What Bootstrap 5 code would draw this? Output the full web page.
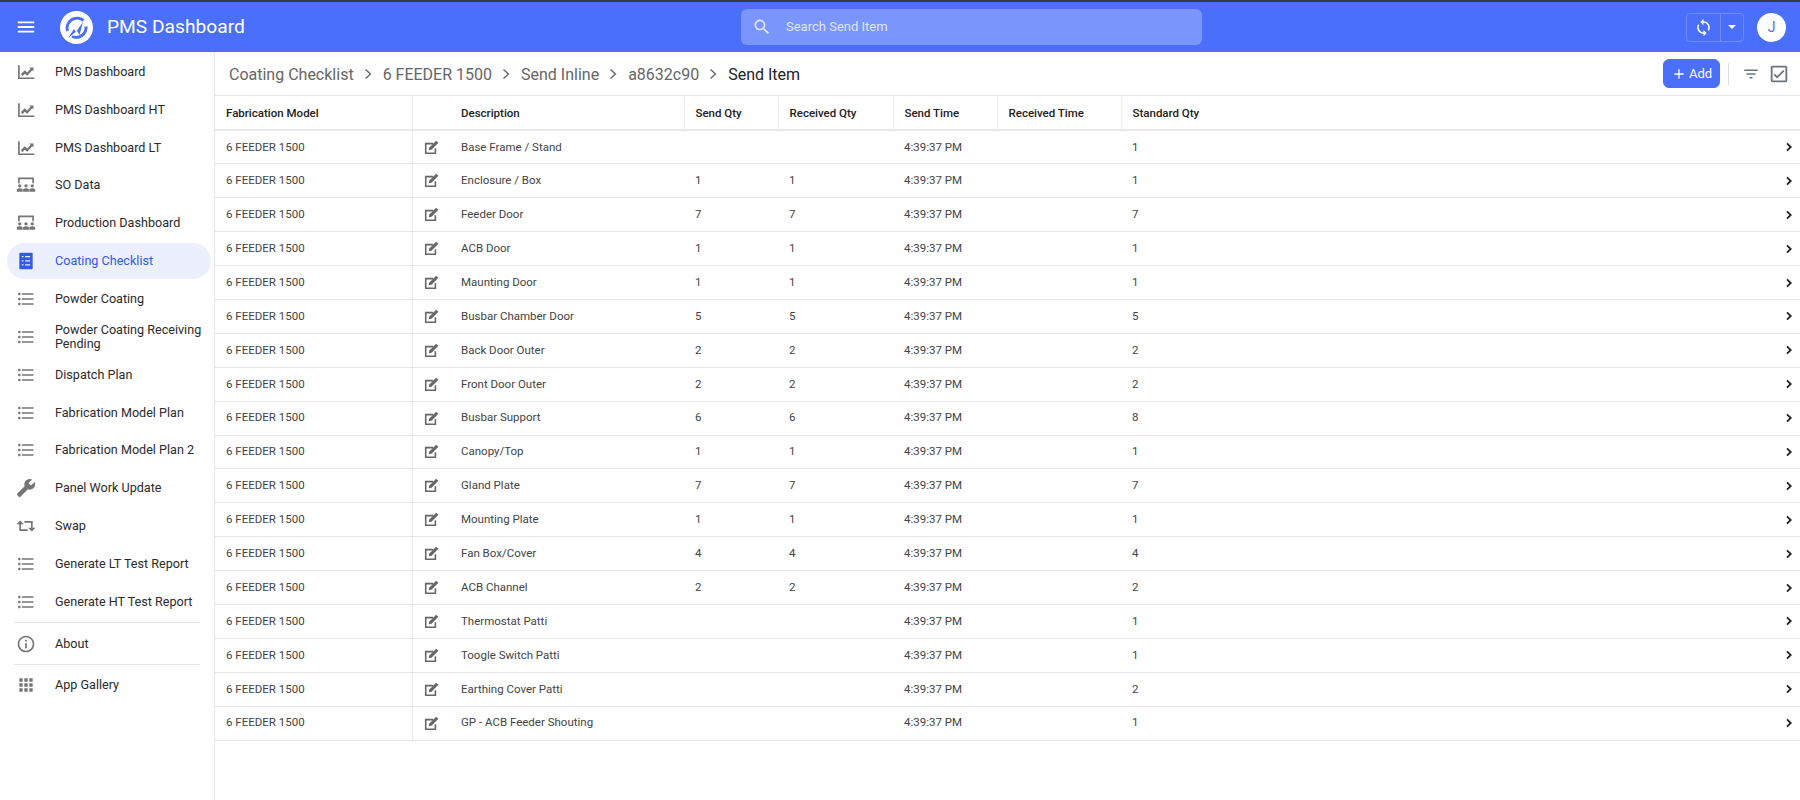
<!DOCTYPE html>
<html lang="en">
<head>
  <meta charset="UTF-8">
  <title>PMS Dashboard</title>
  <link href="https://cdn.jsdelivr.net/npm/bootstrap@5.3.0/dist/css/bootstrap.min.css" rel="stylesheet">
  <style>
    body {
      font-family: Roboto, "Liberation Sans", sans-serif;
      font-size: 13px;
      color: #333;
      background: #fff;
      height: 800px;
      overflow: hidden;
    }
    svg { fill: currentColor; display: block; flex-shrink: 0; }
    .app-top {
      height: 52px;
      background: #4a6ffb;
      border-top: 2px solid #3a3a3a;
      color: #fff;
      padding-left: 15px;
      padding-right: 14px;
    }
    .app-logo {
      width: 33px;
      height: 33px;
      margin-left: 23px;
      margin-right: 14px;
      border-radius: 50%;
      background: #fff;
      flex-shrink: 0;
    }
    .app-title { font-size: 19.2px; width: 634px; flex-shrink: 0; }
    .app-search {
      width: 461px;
      height: 36px;
      background: #7a95fc;
      border-radius: 6px;
      padding-left: 11px;
      color: #dfe6ff;
    }
    .app-search span { margin-left: 14px; }
    .sync-group {
      width: 58px;
      height: 29px;
      margin-right: 13px;
      border: 1px solid #6d8bfc;
      border-radius: 4px;
    }
    .sync-group > div + div { border-left: 1px solid #6d8bfc; }
    .caret-down {
      width: 0;
      height: 0;
      border-left: 4px solid transparent;
      border-right: 4px solid transparent;
      border-top: 4px solid #fff;
    }
    .avatar {
      width: 29px;
      height: 29px;
      border-radius: 50%;
      background: #fff;
      color: #4a6ffb;
      font-size: 14px;
    }
    .side-menu {
      width: 215px;
      flex: 0 0 215px;
      height: 748px;
      border-right: 1px solid #e6e6e6;
      padding: 1px 3px 0 7px;
    }
    .side-item {
      height: 37.85px;
      padding-left: 9px;
      font-size: 12.6px;
      color: #2b2b2b;
      line-height: 14px;
    }
    .side-item svg { color: #757575; margin-right: 19px; }
    .side-item.chosen {
      height: 36px;
      margin-top: .9px;
      margin-bottom: .95px;
      background: #ecf0fd;
      border-radius: 18px;
      color: #2f5be7;
    }
    .side-item.chosen svg { color: #2f5be7; }
    .side-line { border-top: 1px solid #e4e4e4; margin: 1.5px 11px 1.5px 7px; }
    .work-area { min-width: 0; }
    .crumbs {
      height: 44px;
      padding-left: 14px;
      padding-right: 10px;
      border-bottom: 1px solid #e6e6e6;
      font-size: 16px;
      color: #666;
    }
    .crumb-text { padding-top: 2px; }
    .crumbs .here { color: #222; }
    .crumb-sep { margin: 0 10px; color: #666; }
    .add-btn {
      --bs-btn-bg: #4a6ffb;
      --bs-btn-border-color: #4a6ffb;
      --bs-btn-color: #fff;
      --bs-btn-font-size: 13px;
      --bs-btn-padding-x: 7px;
      --bs-btn-padding-y: 0;
      height: 29px;
      width: 57px;
      gap: 2px;
    }
    .tool-sep { width: 1px; height: 22px; background: #ddd; margin: 0 13px 0 8px; }
    .send-table { table-layout: fixed; width: 100%; margin: 0; font-size: 11.5px; color: #444; }
    .send-table th, .send-table td {
      padding: 0 0 0 11px;
      height: 33.9px;
      vertical-align: middle;
      border-bottom: 1px solid #e8e8e8;
      box-shadow: none;
      font-weight: 400;
    }
    .send-table th {
      font-weight: 500;
      color: #222;
      height: 34px;
      padding-top: 2px;
      border-bottom: 2px solid #e8e8e8;
      border-right: 1px solid #f0f0f0;
    }
    .send-table th.no-rule { border-right: 0; }
    .send-table .edit-cell { padding-left: 11px; border-left: 1px solid #ececec; color: #666; }
    .send-table .go-cell { padding: 0 3px 0 0; color: #222; }
  </style>
</head>
<body>
  <header class="app-top d-flex align-items-center">
    <svg width="22" height="22" viewBox="0 0 24 24"><path d="M3 18h18v-2H3v2zm0-5h18v-2H3v2zm0-7v2h18V6H3z"/></svg>
    <div class="app-logo d-flex align-items-center justify-content-center">
      <svg width="27" height="27" viewBox="0 0 27 27"><path d="M20.5 6.5A10 10 0 0 0 4.5 17" fill="none" stroke="#4a6ffb" stroke-width="3"/><path d="M23 12.5A10 10 0 0 1 9 22.5" fill="none" stroke="#4a6ffb" stroke-width="3"/><path d="M5 24l6-9 2 3 7-10-3.5 13-2.5-4z" fill="#4a6ffb"/></svg>
    </div>
    <div class="app-title">PMS Dashboard</div>
    <div class="app-search d-flex align-items-center">
      <svg width="20" height="20" viewBox="0 0 24 24"><path d="M15.5 14h-.79l-.28-.27C15.41 12.59 16 11.11 16 9.5 16 5.91 13.09 3 9.5 3S3 5.91 3 9.5 5.91 16 9.5 16c1.61 0 3.09-.59 4.23-1.57l.27.28v.79l5 4.99L20.49 19l-4.99-5zm-6 0C7.01 14 5 11.99 5 9.5S7.01 5 9.5 5 14 7.01 14 9.5 11.99 14 9.5 14z"/></svg>
      <span>Search Send Item</span>
    </div>
    <div class="ms-auto sync-group d-flex">
      <div class="d-flex align-items-center justify-content-center flex-fill">
        <svg width="19" height="19" viewBox="0 0 24 24"><path d="M12 4V1L8 5l4 4V6c3.31 0 6 2.69 6 6 0 1.01-.25 1.97-.7 2.8l1.46 1.46C19.54 15.03 20 13.57 20 12c0-4.42-3.58-8-8-8zm0 14c-3.31 0-6-2.69-6-6 0-1.01.25-1.97.7-2.8L5.24 7.74C4.46 8.97 4 10.43 4 12c0 4.42 3.58 8 8 8v3l4-4-4-4v3z"/></svg>
      </div>
      <div class="d-flex align-items-center justify-content-center flex-fill"><div class="caret-down"></div></div>
    </div>
    <div class="avatar d-flex align-items-center justify-content-center">J</div>
  </header>

  <div class="d-flex">
    <nav class="side-menu" id="sideMenu"></nav>
    <main class="work-area flex-fill">
      <div class="crumbs d-flex align-items-center" id="crumbs">
        <button class="btn add-btn ms-auto d-flex align-items-center justify-content-center">
          <svg width="16" height="16" viewBox="0 0 24 24"><path d="M19 13h-6v6h-2v-6H5v-2h6V5h2v6h6v2z"/></svg>Add
        </button>
        <div class="tool-sep"></div>
        <svg class="text-secondary me-2" width="18" height="18" viewBox="0 0 24 24"><path d="M10 18h4v-2h-4v2zM3 6v2h18V6H3zm3 7h12v-2H6v2z"/></svg>
        <svg class="text-secondary" width="22" height="22" viewBox="0 0 24 24"><path d="M19 3H5c-1.11 0-2 .9-2 2v14c0 1.1.89 2 2 2h14c1.11 0 2-.9 2-2V5c0-1.1-.89-2-2-2zm0 16H5V5h14v14zM17.99 9l-1.41-1.42-6.59 6.59-2.58-2.57-1.42 1.41 4 3.99z"/></svg>
      </div>
      <table class="table send-table">
        <colgroup>
          <col style="width:197px"><col style="width:38px"><col style="width:234px"><col style="width:94px"><col style="width:115px"><col style="width:104px"><col style="width:124px"><col><col style="width:30px">
        </colgroup>
        <thead>
          <tr><th>Fabrication Model</th><th class="no-rule"></th><th>Description</th><th>Send Qty</th><th>Received Qty</th><th>Send Time</th><th>Received Time</th><th class="no-rule">Standard Qty</th><th class="no-rule"></th></tr>
        </thead>
        <tbody id="rows"></tbody>
      </table>
    </main>
  </div>

  <script>
    const chart = '<path d="M2.5 4h2v14.5H22v2H2.5z"/><path d="M6 14.5l4.5-4.5 3 2.5 4-4.5-1.5-1.5h5v5L19.5 10l-6 6.5-3-2.5-3 3z"/>';
    const people = '<path d="M2.5 3h19v7h-2V5h-15v5h-2z"/><circle cx="4.5" cy="13" r="2"/><circle cx="12" cy="13" r="2"/><circle cx="19.5" cy="13" r="2"/><path d="M1 20v-3q3.5-2 7 0v3zM8.5 20v-3q3.5-2 7 0v3zM16 20v-3q3.5-2 7 0v3z"/>';
    const list = '<path d="M4 10.5c-.83 0-1.5.67-1.5 1.5s.67 1.5 1.5 1.5 1.5-.67 1.5-1.5-.67-1.5-1.5-1.5zm0-6c-.83 0-1.5.67-1.5 1.5S3.17 7.5 4 7.5 5.5 6.83 5.5 6 4.83 4.5 4 4.5zm0 12c-.83 0-1.5.68-1.5 1.5s.68 1.5 1.5 1.5 1.5-.68 1.5-1.5-.67-1.5-1.5-1.5zM7 19h14v-2H7v2zm0-6h14v-2H7v2zm0-8v2h14V5H7z"/>';
    const checklist = '<path fill-rule="evenodd" d="M5 2h14a1 1 0 0 1 1 1v18a1 1 0 0 1-1 1H5a1 1 0 0 1-1-1V3a1 1 0 0 1 1-1zM11 6v1.5h6V6zM11 11v1.5h6V11zM11 16v1.5h6V16zM7 6v1.5h2V6zM7 11v1.5h2V11zM7 16v1.5h2V16z"/>';
    const wrench = '<path transform="matrix(-1 0 0 1 24 0)" d="M22.7 19l-9.1-9.1c.9-2.3.4-5-1.5-6.9-2-2-5-2.4-7.4-1.3L9 6 6 9 1.6 4.7C.4 7.1.9 10.1 2.9 12.1c1.9 1.9 4.6 2.4 6.9 1.5l9.1 9.1c.4.4 1 .4 1.4 0l2.3-2.3c.5-.4.5-1.1.1-1.4z"/>';
    const swap = '<path d="M.5 10L5 5.5 9.5 10H6v6h8v2H4v-8zM23.5 14L19 18.5 14.5 14H18V8h-8V6h10v8z"/>';
    const info = '<path d="M11 7h2v2h-2zm0 4h2v6h-2zm1-9C6.48 2 2 6.48 2 12s4.48 10 10 10 10-4.48 10-10S17.52 2 12 2zm0 18c-4.41 0-8-3.59-8-8s3.59-8 8-8 8 3.59 8 8-3.59 8-8 8z"/>';
    const apps = '<path d="M4 8h4V4H4v4zm6 12h4v-4h-4v4zm-6 0h4v-4H4v4zm0-6h4v-4H4v4zm6 0h4v-4h-4v4zm6-10v4h4V4h-4zm-6 4h4V4h-4v4zm6 6h4v-4h-4v4zm0 6h4v-4h-4v4z"/>';

    const menu = [
      [chart, "PMS Dashboard"], [chart, "PMS Dashboard HT"], [chart, "PMS Dashboard LT"],
      [people, "SO Data"], [people, "Production Dashboard"], [checklist, "Coating Checklist", true],
      [list, "Powder Coating"], [list, "Powder Coating Receiving Pending"], [list, "Dispatch Plan"],
      [list, "Fabrication Model Plan"], [list, "Fabrication Model Plan 2"], [wrench, "Panel Work Update"],
      [swap, "Swap"], [list, "Generate LT Test Report"], [list, "Generate HT Test Report"],
      "line", [info, "About"], "line", [apps, "App Gallery"]
    ];
    document.getElementById("sideMenu").innerHTML = menu.map(m => {
      if (m === "line") return '<div class="side-line"></div>';
      return `<div class="side-item d-flex align-items-center${m[2] ? " chosen" : ""}"><svg width="20" height="20" viewBox="0 0 24 24">${m[0]}</svg><span>${m[1]}</span></div>`;
    }).join("");

    // breadcrumb goes in front of the toolbar buttons
    const sep = '<svg class="crumb-sep" width="9" height="12" viewBox="0 0 9 12"><path d="M1.5 1.5L6.5 6l-5 4.5" fill="none" stroke="currentColor" stroke-width="1.4"/></svg>';
    const trail = ["Coating Checklist", "6 FEEDER 1500", "Send Inline", "a8632c90"];
    const crumbs = trail.map(t => `<span class="crumb-text">${t}</span>${sep}`).join("") + '<span class="crumb-text here">Send Item</span>';
    document.getElementById("crumbs").insertAdjacentHTML("afterbegin", crumbs);

    const items = [
      ["Base Frame / Stand", "", "", 1], ["Enclosure / Box", 1, 1, 1], ["Feeder Door", 7, 7, 7],
      ["ACB Door", 1, 1, 1], ["Maunting Door", 1, 1, 1], ["Busbar Chamber Door", 5, 5, 5],
      ["Back Door Outer", 2, 2, 2], ["Front Door Outer", 2, 2, 2], ["Busbar Support", 6, 6, 8],
      ["Canopy/Top", 1, 1, 1], ["Gland Plate", 7, 7, 7], ["Mounting Plate", 1, 1, 1],
      ["Fan Box/Cover", 4, 4, 4], ["ACB Channel", 2, 2, 2], ["Thermostat Patti", "", "", 1],
      ["Toogle Switch Patti", "", "", 1], ["Earthing Cover Patti", "", "", 2], ["GP - ACB Feeder Shouting", "", "", 1]
    ];
    const editIcon = '<svg width="15" height="15" viewBox="0 0 24 24"><path d="M1.5 4.5h13V7H4v13h13v-7h2.5v9.5h-18z"/><path d="M19.5 1L23 4.5 12 15.5l-4.5 1 1-4.5z"/></svg>';
    const goIcon = '<svg class="ms-auto" width="16" height="16" viewBox="0 0 24 24"><path d="M8 16.6L12.6 12 8 7.4 10 5.5l6.5 6.5-6.5 6.5z"/></svg>';
    document.getElementById("rows").innerHTML = items.map(i => `<tr>
      <td>6 FEEDER 1500</td><td class="edit-cell">${editIcon}</td><td>${i[0]}</td><td>${i[1]}</td><td>${i[2]}</td>
      <td>4:39:37 PM</td><td></td><td>${i[3]}</td><td class="go-cell">${goIcon}</td></tr>`).join("");
  </script>
  <script src="https://cdn.jsdelivr.net/npm/bootstrap@5.3.0/dist/js/bootstrap.bundle.min.js"></script>
</body>
</html>
